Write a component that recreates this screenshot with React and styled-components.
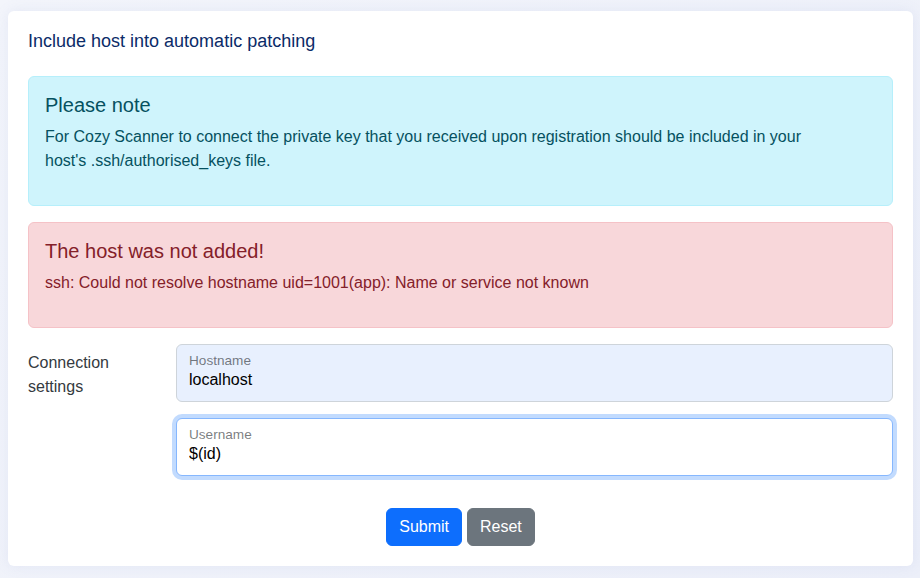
import React from "react";
import styled, { createGlobalStyle } from "styled-components";

const GlobalStyle = createGlobalStyle`
  html, body {
    margin: 0;
    padding: 0;
  }
  body {
    font-family: "Liberation Sans", Arial, sans-serif;
    font-size: 16px;
    line-height: 1.5;
    color: #212529;
    background: linear-gradient(135deg, #f3f5fb 0%, #eceff9 100%);
    min-height: 578px;
  }
  * {
    box-sizing: border-box;
  }
`;

const Page = styled.div`
  padding: 11px 7px 13px 8px;
`;

const Card = styled.div`
  background: #fff;
  border-radius: 6px;
  box-shadow: 0 0 14px rgba(120, 140, 200, 0.12);
  padding: 20px 20px 20px;
`;

const CardTitle = styled.h5`
  margin: 0 0 23px;
  font-size: 18px;
  font-weight: 400;
  line-height: 1.2;
  color: #0b2b68;
`;

const variants = {
  info: { bg: "#cff4fc", border: "#b6effb", color: "#055160" },
  danger: { bg: "#f8d7da", border: "#f5c2c7", color: "#842029" },
};

const Alert = styled.div`
  padding: 16px;
  margin-bottom: 16px;
  border: 1px solid ${(p) => variants[p.$variant].border};
  border-radius: 6px;
  background: ${(p) => variants[p.$variant].bg};
  color: ${(p) => variants[p.$variant].color};
`;

const AlertHeading = styled.h4`
  margin: 0 0 8px;
  font-size: 20px;
  font-weight: 400;
  line-height: 1.2;
`;

const AlertText = styled.p`
  margin: 0 0 16px;
  max-width: 780px;
`;

const FormRow = styled.div`
  display: grid;
  grid-template-columns: 148px 1fr;
  margin-bottom: 32px;
`;

const RowLabel = styled.label`
  padding-top: 7px;
  padding-right: 24px;
  line-height: 24px;
  color: #343a40;
`;

const Fields = styled.div`
  display: flex;
  flex-direction: column;
  gap: 16px;
`;

const FloatingField = styled.div`
  height: 58px;
  padding: 8px 12px 0 12px;
  border: 1px solid ${(p) => (p.$focused ? "#86b7fe" : "#ced4da")};
  border-radius: 6px;
  background: ${(p) => (p.$autofill ? "#e8f0fe" : "#fff")};
  box-shadow: ${(p) =>
    p.$focused ? "0 0 0 4px rgba(13, 110, 253, 0.25)" : "none"};
  display: flex;
  flex-direction: column;
`;

const FieldLabel = styled.label`
  font-size: 13.6px;
  line-height: 15px;
  color: rgba(33, 37, 41, 0.6);
`;

const FieldInput = styled.input`
  border: none;
  outline: none;
  padding: 0;
  margin: 0;
  background: transparent;
  font-family: inherit;
  font-size: 16px;
  line-height: 24px;
  height: 24px;
  color: #000;
`;

const Actions = styled.div`
  display: flex;
  justify-content: center;
  gap: 5px;
`;

const Button = styled.button`
  font-family: inherit;
  font-size: 16px;
  line-height: 24px;
  padding: 6px 12px;
  border: 1px solid ${(p) => (p.$secondary ? "#6c757d" : "#0d6efd")};
  border-radius: 6px;
  background: ${(p) => (p.$secondary ? "#6c757d" : "#0d6efd")};
  color: #fff;
  cursor: pointer;
`;

export default function App() {
  return (
    <Page>
      <GlobalStyle />
      <Card>
        <CardTitle>Include host into automatic patching</CardTitle>

        <Alert $variant="info">
          <AlertHeading>Please note</AlertHeading>
          <AlertText>
            For Cozy Scanner to connect the private key that you received upon
            registration should be included in your host's .ssh/authorised_keys
            file.
          </AlertText>
        </Alert>

        <Alert $variant="danger">
          <AlertHeading>The host was not added!</AlertHeading>
          <AlertText>
            ssh: Could not resolve hostname uid=1001(app): Name or service not
            known
          </AlertText>
        </Alert>

        <FormRow>
          <RowLabel>Connection settings</RowLabel>
          <Fields>
            <FloatingField $autofill>
              <FieldLabel htmlFor="hostname">Hostname</FieldLabel>
              <FieldInput id="hostname" defaultValue="localhost" />
            </FloatingField>
            <FloatingField $focused>
              <FieldLabel htmlFor="username">Username</FieldLabel>
              <FieldInput id="username" defaultValue="$(id)" />
            </FloatingField>
          </Fields>
        </FormRow>

        <Actions>
          <Button type="button">Submit</Button>
          <Button type="button" $secondary>
            Reset
          </Button>
        </Actions>
      </Card>
    </Page>
  );
}
